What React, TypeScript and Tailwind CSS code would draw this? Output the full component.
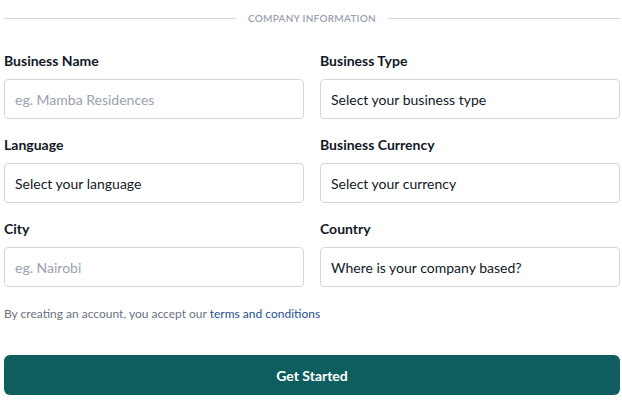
import { memo } from 'react';

const font = { fontFamily: '"Segoe UI", Lato, "Open Sans", sans-serif' };

interface FieldProps {
    label: string;
    value: string;
    placeholder?: boolean;
}

const Field = memo(function Field({ label, value, placeholder }: FieldProps) {
    return (
        <div className="flex flex-col">
            <label className="text-[14px] leading-5 font-bold text-gray-900">{label}</label>
            <div className="mt-2 h-10 rounded border border-gray-300 bg-white px-[10px] flex items-center">
                <span className={`text-[14px] ${placeholder ? 'text-gray-400' : 'text-gray-900'}`}>{value}</span>
            </div>
        </div>
    );
});

export default function App() {
    return (
        <div className="w-[622px] h-[400px] bg-white pl-1 pr-[2px]" style={font}>
            {/* section divider */}
            <div className="flex items-center gap-2 pt-3">
                <div className="flex-1 h-px bg-gray-300" />
                <span className="text-[10px] leading-3 font-semibold uppercase tracking-wide text-gray-400 px-1">Company Information</span>
                <div className="flex-1 h-px bg-gray-300" />
            </div>

            <div className="mt-[27px] grid grid-cols-2 gap-x-4 gap-y-4">
                <Field label="Business Name" value="eg. Mamba Residences" placeholder />
                <Field label="Business Type" value="Select your business type" />
                <Field label="Language" value="Select your language" />
                <Field label="Business Currency" value="Select your currency" />
                <Field label="City" value="eg. Nairobi" placeholder />
                <Field label="Country" value="Where is your company based?" />
            </div>

            <p className="mt-[19px] text-[12px] leading-4 text-gray-500">
                By creating an account, you accept our <a className="text-[#1d4f91]">terms and conditions</a>
            </p>

            <button className="mt-[33px] w-full h-10 rounded-md bg-[#0f5e5f] text-white text-[14px] font-bold">
                Get Started
            </button>
        </div>
    );
}
